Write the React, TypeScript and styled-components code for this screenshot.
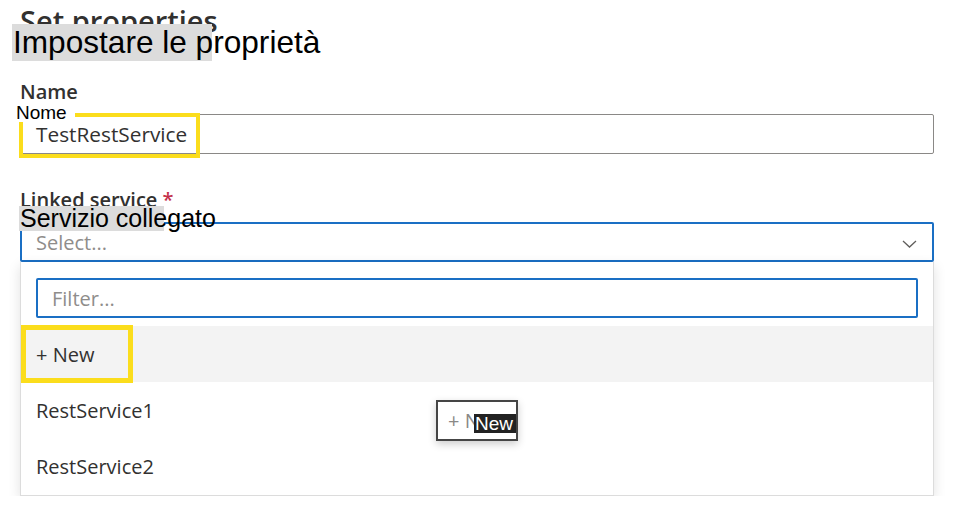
import React from 'react'
import styled, { createGlobalStyle } from 'styled-components'

const colors = {
  text: '#323130',
  placeholder: '#8f8d8b',
  border: '#8a8886',
  blue: '#1a6fc4',
  hover: '#f3f3f3',
  highlight: '#fbdd1c',
  caption: '#dcdcdc',
}

const GlobalStyle = createGlobalStyle`
  html, body {
    margin: 0;
    padding: 0;
    background: #ffffff;
  }
  body {
    font-family: 'Open Sans', 'Noto Sans', sans-serif;
    color: ${colors.text};
  }
`

// translated caption stuck on top of the original UI
const Caption = styled.div<{ $size: number; $bg?: string; $bgWidth?: number; $height: number }>`
  position: absolute;
  font-family: 'Liberation Sans', Arial, sans-serif;
  font-size: ${p => p.$size}px;
  line-height: ${p => p.$height}px;
  height: ${p => p.$height}px;
  color: #000000;
  white-space: nowrap;
  z-index: 3;
  &::before {
    content: '';
    position: absolute;
    left: 0;
    top: 0;
    bottom: 0;
    width: ${p => (p.$bgWidth ? `${p.$bgWidth}px` : '100%')};
    background: ${p => p.$bg || 'transparent'};
    z-index: -1;
  }
`

const HeadingCaption = styled(Caption)`
  left: -8px;
  top: 19px;
  padding-left: 1px;
`

const NameCaption = styled(Caption)`
  left: -5px;
  top: -10px;
  width: 59px;
  padding-left: 1px;
`

const LinkedCaption = styled(Caption)`
  left: -1px;
  top: -16px;
  padding-left: 1px;
`

// yellow callout frame drawn over a control
const Highlight = styled.div<{ $w: number; $h: number; $thick: number; $left: number; $top: number }>`
  position: absolute;
  left: ${p => p.$left}px;
  top: ${p => p.$top}px;
  box-sizing: border-box;
  width: ${p => p.$w}px;
  height: ${p => p.$h}px;
  border: ${p => p.$thick}px solid ${colors.highlight};
  z-index: 2;
  pointer-events: none;
`

const Page = styled.div`
  width: 914px;
  padding: 5px 20px 0;
`

const Header = styled.div`
  position: relative;
`

const Title = styled.h2`
  margin: 0;
  font-size: 29px;
  line-height: 32px;
  font-weight: 600;
  color: ${colors.text};
`

const Field = styled.div<{ $top: number }>`
  margin-top: ${p => p.$top}px;
`

const Label = styled.label`
  display: block;
  font-size: 20px;
  line-height: 28px;
  font-weight: 600;
  margin-bottom: 8px;
  color: ${colors.text};
  .required {
    color: #c4314b;
    padding-left: 5px;
  }
`

const InputWrap = styled.div`
  position: relative;
`

const TextBox = styled.div<{ $focused?: boolean; $size?: number }>`
  box-sizing: border-box;
  height: 40px;
  display: flex;
  align-items: center;
  border: ${p => (p.$focused ? `2px solid ${colors.blue}` : `1px solid ${colors.border}`)};
  border-radius: 2px;
  padding-left: ${p => (p.$focused ? 14 : 15)}px;
  padding-right: 15px;
  font-size: ${p => p.$size || 20}px;
  color: ${colors.text};
  background: #ffffff;
  .placeholder {
    color: ${colors.placeholder};
    flex: 1;
  }
`

const Chevron = styled.svg`
  width: 15px;
  height: 8px;
  margin-top: 3px;
`

const Panel = styled.div`
  position: relative;
  box-sizing: border-box;
  border: 1px solid #dcdcdc;
  border-top: none;
  padding: 16px 0 1px;
  background: #ffffff;
  box-shadow: 0 4px 12px rgba(0, 0, 0, 0.12);
`

const FilterWrap = styled.div`
  padding: 0 15px 8px;
`

const Option = styled.div<{ $active?: boolean }>`
  position: relative;
  height: 56px;
  display: flex;
  align-items: center;
  padding-left: 15px;
  font-size: 20px;
  color: ${colors.text};
  background: ${p => (p.$active ? colors.hover : '#ffffff')};
`

const DragGhost = styled.div`
  position: absolute;
  left: 415px;
  top: 138px;
  box-sizing: border-box;
  width: 82px;
  height: 41px;
  border: 2px solid #454545;
  background: #ffffff;
  box-shadow: 0 3px 8px rgba(0, 0, 0, 0.2);
  padding-left: 10px;
  font-size: 20px;
  line-height: 37px;
  color: #8a8886;
  overflow: hidden;
  z-index: 4;
  .selection {
    position: absolute;
    left: 36px;
    top: 12px;
    height: 19px;
    padding: 0 3px 0 1px;
    background: #222222;
    color: #ffffff;
    font-family: 'Liberation Sans', Arial, sans-serif;
    font-size: 19px;
    line-height: 20px;
  }
`

const services = ['RestService1', 'RestService2']

export default function App() {
  return (
    <>
      <GlobalStyle />
      <Page>
        <Header>
          <Title>Set properties</Title>
          <HeadingCaption $size={31.6} $height={37} $bg={colors.caption} $bgWidth={200}>
            Impostare le proprietà
          </HeadingCaption>
        </Header>

        <Field $top={41}>
          <Label>Name</Label>
          <InputWrap>
            <TextBox $size={20.8}>TestRestService</TextBox>
            <Highlight $w={181} $h={45} $thick={4} $left={-1} $top={-1} />
            <NameCaption $size={19} $height={18} $bg="#ffffff">
              Nome
            </NameCaption>
          </InputWrap>
        </Field>

        <Field $top={32}>
          <Label>
            Linked service<span className="required">*</span>
          </Label>
          <InputWrap>
            <TextBox $focused>
              <span className="placeholder">Select...</span>
              <Chevron viewBox="0 0 15 8">
                <polyline points="1,1 7.5,7 14,1" fill="none" stroke="#605e5c" strokeWidth="1.3" />
              </Chevron>
            </TextBox>
            <LinkedCaption $size={25} $height={25} $bg={colors.caption} $bgWidth={145}>
              Servizio collegato
            </LinkedCaption>
          </InputWrap>
          <Panel>
            <FilterWrap>
              <TextBox $focused>
                <span className="placeholder">Filter...</span>
              </TextBox>
            </FilterWrap>
            <Option $active>
              + New
              <Highlight $w={112} $h={58} $thick={5} $left={0} $top={-1} />
            </Option>
            {services.map(name => (
              <Option key={name}>{name}</Option>
            ))}
            <DragGhost>
              + New
              <span className="selection">New</span>
            </DragGhost>
          </Panel>
        </Field>
      </Page>
    </>
  )
}
